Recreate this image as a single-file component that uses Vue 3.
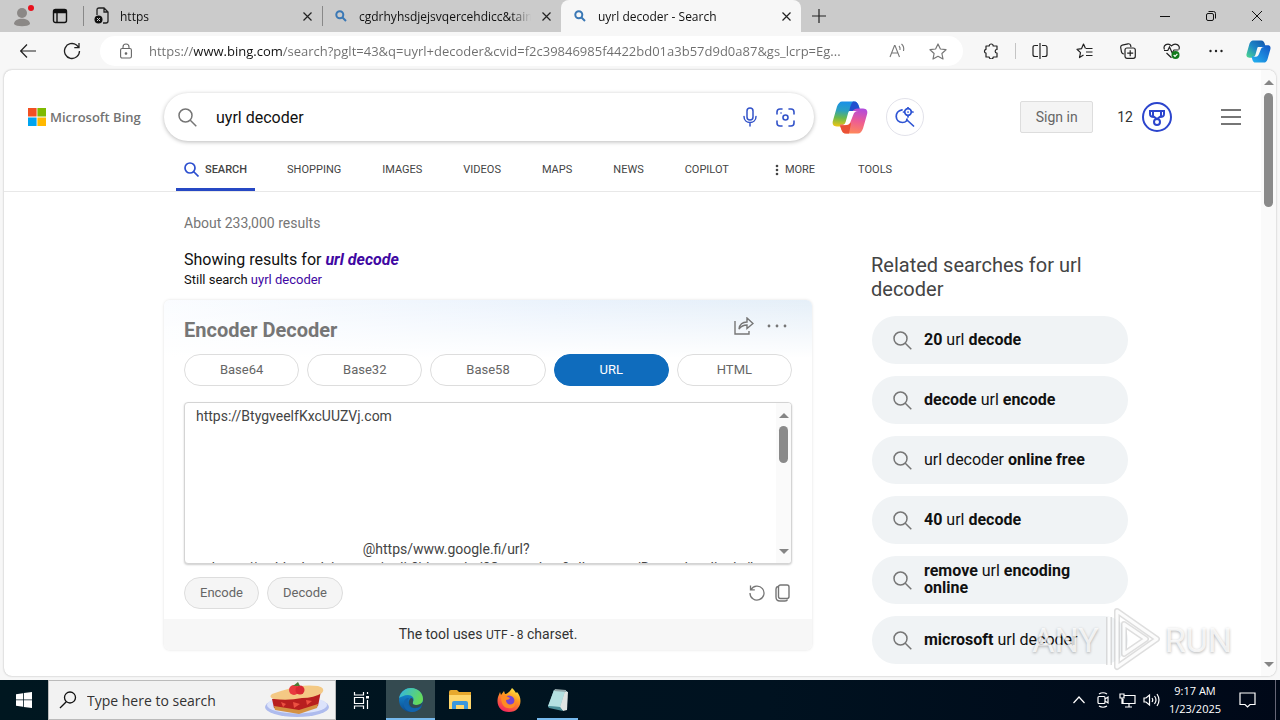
<template>
  <div class="desktop">
    <div class="browser">
      <header class="tab-bar">
        <button class="tab-tool profile" aria-label="Profile">
          <svg width="24" height="24" viewBox="0 0 24 24">
            <circle cx="10" cy="9" r="5" fill="#8b8886" />
            <path d="M2 20c0-7 16-7 16 0-2 3-14 3-16 0z" fill="#8b8886" />
            <circle cx="19" cy="4" r="3" fill="#e8101c" />
          </svg>
        </button>
        <button class="tab-tool workspaces" aria-label="Workspaces">
          <svg width="16" height="16" viewBox="0 0 16 16" fill="none" stroke="#111" stroke-width="1.4">
            <rect x="1.5" y="1.5" width="13" height="13" rx="2" />
            <path d="M1.5 3.5h13M5 5v9" />
            <path d="M2 2.5h12v2H2z" fill="#111" />
          </svg>
        </button>
        <div v-for="tab in tabs" :key="tab.title" class="tab" :class="{ active: tab.active }">
          <svg v-if="tab.file" width="16" height="18" viewBox="0 0 16 18" fill="none" stroke="#222" stroke-width="1.3">
            <path d="M3 8V3q0-2 2-2h5l4 4v9q0 2-2 2H9M10 1v4h4" />
            <circle cx="4.5" cy="12.5" r="4" fill="#111" stroke="none" />
            <path d="M3 11l3 3M6 11l-3 3" stroke="#ccc" stroke-width="1" />
          </svg>
          <svg v-else class="favicon" width="12" height="12" viewBox="0 0 12 12" fill="none" stroke="#3a78b5" stroke-width="2">
            <circle cx="4.8" cy="4.8" r="3.5" />
            <path d="M7.5 7.5l3.5 3.5" />
          </svg>
          <span class="tab-title">{{ tab.title }}</span>
          <button class="tab-close" aria-label="Close tab">
            <svg width="9" height="9" viewBox="0 0 9 9" stroke="#222" stroke-width="1.2"><path d="M.5.5l8 8M8.5.5l-8 8" /></svg>
          </button>
        </div>
        <button class="new-tab" aria-label="New tab">
          <svg width="14" height="14" viewBox="0 0 14 14" stroke="#222" stroke-width="1.2"><path d="M7 0v14M0 7h14" /></svg>
        </button>
        <div class="window-controls">
          <button aria-label="Minimize">
            <svg width="10" height="10" viewBox="0 0 10 10" stroke="#111"><path d="M0 5.5h10" /></svg>
          </button>
          <button aria-label="Restore">
            <svg width="10" height="10" viewBox="0 0 10 10" fill="none" stroke="#111">
              <rect x=".5" y="2.5" width="7" height="7" rx="1.5" />
              <path d="M2.500.5h5q2 0 2 2v5" />
            </svg>
          </button>
          <button aria-label="Close">
            <svg width="10" height="10" viewBox="0 0 10 10" stroke="#111"><path d="M0 0l10 10M10 0L0 10" /></svg>
          </button>
        </div>
      </header>

      <div class="toolbar">
        <button class="tool" aria-label="Back">
          <svg width="16" height="14" viewBox="0 0 16 14" fill="none" stroke="#222" stroke-width="1.2"><path d="M16 7H1M7 .5L.7 7 7 13.5" /></svg>
        </button>
        <button class="tool" aria-label="Refresh">
          <svg width="18" height="18" viewBox="0 0 18 18" fill="none" stroke="#222" stroke-width="1.3">
            <path d="M16.5 9A7.5 7.5 0 1 1 13.5 3L16 5.5M16 1v4.700h-4.700" />
          </svg>
        </button>
        <div class="address">
          <svg width="12" height="16" viewBox="0 0 12 16" fill="none" stroke="#666" stroke-width="1.1">
            <rect x=".6" y="5.5" width="10.8" height="9.5" rx="1.5" />
            <path d="M3 5.5V4q0-3 3-3t3 3v1.5" />
            <circle cx="6" cy="10.5" r=".8" fill="#666" />
          </svg>
          <input v-model="url" type="text" aria-label="Address" spellcheck="false" />
          <button aria-label="Read aloud">
            <svg width="18" height="16" viewBox="0 0 18 16" fill="none" stroke="#777" stroke-width="1.1">
              <path d="M1 14L5.5 2.5h.5L10.5 14M2.800 10h6M10 3q1.500 1.500 1 4M12.5 1q3 2.500 2 7" />
            </svg>
          </button>
          <button aria-label="Add to favorites">
            <svg width="18" height="17" viewBox="0 0 18 17" fill="none" stroke="#777" stroke-width="1.2" stroke-linejoin="round">
              <path d="M9 1l2.400 5 5.600.7-4.100 3.800 1.100 5.500L9 13.300 4 16l1.100-5.500L1 6.700 6.600 6z" />
            </svg>
          </button>
        </div>
        <button class="tool" aria-label="Extensions">
          <svg width="16" height="16" viewBox="0 0 16 16" fill="none" stroke="#222" stroke-width="1.2" stroke-linejoin="round">
            <path d="M3 3h3.200a2 2 0 0 1 4 0H14v3.500a1.800 1.800 0 0 0 0 3.700V14h-3.800a2 2 0 0 1-4 0H3v-3.800a2 2 0 0 1 0-3.900z" />
          </svg>
        </button>
        <span class="tool-divider"></span>
        <button class="tool" aria-label="Split screen">
          <svg width="16" height="16" viewBox="0 0 16 16" fill="none" stroke="#222" stroke-width="1.2">
            <path d="M6 2.5H3q-2 0-2 2v7q0 2 2 2h3M10 2.5h3q2 0 2 2v7q0 2-2 2h-3M8 0v16" />
          </svg>
        </button>
        <button class="tool" aria-label="Favorites">
          <svg width="17" height="16" viewBox="0 0 17 16" fill="none" stroke="#222" stroke-width="1.2" stroke-linejoin="round">
            <path d="M9.5 5.5L7.5 1l-2 4.700L1 6.300l3.500 3.300-1 5L7.5 12M10 5.5h6.500M10 9h6.500M10 12.5h6.500" />
          </svg>
        </button>
        <button class="tool" aria-label="Collections">
          <svg width="16" height="16" viewBox="0 0 16 16" fill="none" stroke="#222" stroke-width="1.2">
            <path d="M4 11q-2 0-2.500-2L.7 4.500Q.5 2.700 2.200 2.200L8 .8q2-.3 2.600 1.500L11 4" />
            <rect x="5" y="5" width="10.3" height="10.3" rx="2" />
            <path d="M10.2 7.300v6M7.200 10.200h6" />
          </svg>
        </button>
        <button class="tool" aria-label="Browser essentials">
          <svg width="18" height="18" viewBox="0 0 18 18" fill="none" stroke="#222" stroke-width="1.2">
            <path d="M1.500 7.500C-.5 3 5 .2 8.500 3.800 12 .2 18 3 15.800 7.500M1 8.500h3.800L6.500 5l2.700 6 1.800-3h4.500M3.500 11l5 4.800" />
            <circle cx="12.5" cy="13" r="4" fill="#117a1b" stroke="none" />
            <path d="M10.700 13l1.300 1.300 2.400-2.500" stroke="#fff" />
          </svg>
        </button>
        <button class="tool" aria-label="Settings and more">
          <svg width="14" height="4" viewBox="0 0 14 4" fill="#222"><circle cx="1.5" cy="2" r="1.2" /><circle cx="7" cy="2" r="1.2" /><circle cx="12.5" cy="2" r="1.2" /></svg>
        </button>
        <button class="tool copilot-tool" aria-label="Copilot">
          <svg width="25" height="23" viewBox="0 0 36 32">
            <defs>
              <linearGradient id="sideA" x1="1" y1="0" x2="0" y2="1"><stop offset="0" stop-color="#1352a8" /><stop offset=".5" stop-color="#1d86c7" /><stop offset="1" stop-color="#4fdb8d" /></linearGradient>
              <linearGradient id="sideB" x1="1" y1="0" x2="0" y2="1"><stop offset="0" stop-color="#24b5f1" /><stop offset="1" stop-color="#1255c5" /></linearGradient>
            </defs>
            <path :d="ribbon" fill="url(#sideA)" />
            <path :d="ribbon" fill="url(#sideB)" transform="rotate(180 18 16)" />
            <path :d="ribbonGap" fill="#f7f7f7" />
          </svg>
        </button>
      </div>

      <div class="page">
        <div class="content">
          <div class="search-header">
            <a href="#" class="logo">
              <svg width="18" height="18" viewBox="0 0 18 18">
                <path d="M0 0h8.600v8.600H0z" fill="#f25022" /><path d="M9.400 0H18v8.600H9.400z" fill="#7fba00" />
                <path d="M0 9.400h8.600V18H0z" fill="#00a4ef" /><path d="M9.400 9.400H18V18H9.400z" fill="#ffb900" />
              </svg>
              <span>Microsoft Bing</span>
            </a>
            <form class="search-box" @submit.prevent>
              <svg width="19" height="19" viewBox="0 0 19 19" fill="none" stroke="#767676" stroke-width="1.5"><circle cx="7.5" cy="7.5" r="6.5" /><path d="M12.3 12.3l6 6" /></svg>
              <input v-model="query" type="text" aria-label="Search query" spellcheck="false" />
              <button type="button" aria-label="Search by voice">
                <svg width="14" height="20" viewBox="0 0 14 20" fill="none" stroke="#3353c9" stroke-width="1.5" stroke-linecap="round">
                  <rect x="4" y="1" width="6" height="12" rx="3" /><path d="M1 9.500c0 8 12 8 12 0M7 16v3" />
                </svg>
              </button>
              <button type="button" aria-label="Search by image">
                <svg width="19" height="19" viewBox="0 0 19 19" fill="none" stroke="#3353c9" stroke-width="1.6" stroke-linecap="round">
                  <path d="M1 6V4q0-3 3-3h2M13 1h2q3 0 3 3v2M18 13v2q0 3-3 3h-2M6 18H4q-3 0-3-3v-2" />
                  <circle cx="9.5" cy="9.5" r="2.5" /><path d="M5 5h.1" />
                </svg>
              </button>
            </form>
            <a href="#" class="copilot" aria-label="Copilot">
              <svg width="36" height="33" viewBox="0 0 36 32">
                <defs>
                  <linearGradient id="mainA" x1=".3" y1="0" x2=".2" y2="1"><stop offset="0" stop-color="#1890e8" /><stop offset=".35" stop-color="#2ba0c0" /><stop offset=".65" stop-color="#6cb94c" /><stop offset="1" stop-color="#f0c614" /></linearGradient>
                  <linearGradient id="mainB" x1=".4" y1="1" x2=".6" y2="0"><stop offset="0" stop-color="#b34cda" /><stop offset=".5" stop-color="#ee5d92" /><stop offset="1" stop-color="#ff8a58" /></linearGradient>
                </defs>
                <path :d="ribbon" fill="url(#mainA)" />
                <path d="M19 0h3c3 0 4 2 5 5l1 4h-4c-3 0-4 1-5 4l-2-3c1-4 2-8 4-10z" fill="#2250cf" />
                <path :d="ribbon" fill="url(#mainB)" transform="rotate(180 18 16)" />
                <path d="M17 32h-3c-3 0-4-2-5-5l-1-3h4c3 0 4-1 5-4l2 2z" fill="#ea5136" />
                <path :d="ribbonGap" fill="#fff" />
              </svg>
            </a>
            <button class="deep-search" aria-label="Deep search">
              <svg width="20" height="20" viewBox="0 0 20 20" fill="none" stroke="#2f55d4" stroke-width="1.7" stroke-linecap="round">
                <path d="M7 2.800C-1 4-.5 15.500 7.500 15.500c2 0 3.300-.8 4-1.500l.5-2M12 13l6.500 6" />
                <circle cx="13" cy="5" r="3.3" /><path d="M13 .2v1M13 9v1M8.500 5h.8M17 5h1M13 5h.1" />
              </svg>
            </button>
            <div class="account">
              <button class="sign-in">Sign in</button>
              <a href="#" class="rewards">
                <span>12</span>
                <svg width="30" height="30" viewBox="0 0 30 30" fill="none" stroke="#2c45cd" stroke-width="2">
                  <circle cx="15" cy="15" r="14" />
                  <path d="M11 9h8v5l-4 3-4-3zM11 9H8v3q0 3 4 3M19 9h3v3q0 3-4 3" /><circle cx="15" cy="20" r="3" />
                </svg>
              </a>
              <button class="menu" aria-label="Settings and quick links"><i></i><i></i><i></i></button>
            </div>
          </div>

          <nav class="scopes">
            <a href="#" class="current">
              <svg width="15" height="15" viewBox="0 0 15 15" fill="none" stroke="#2c4fcf" stroke-width="1.7"><circle cx="6" cy="6" r="5" /><path d="M9.500 9.500l5 5" /></svg>
              SEARCH
            </a>
            <a v-for="scope in scopes" :key="scope" href="#">{{ scope }}</a>
            <a href="#" class="more">
              <svg width="4" height="12" viewBox="0 0 4 12" fill="#444"><circle cx="2" cy="2" r="1.3" /><circle cx="2" cy="6" r="1.3" /><circle cx="2" cy="10" r="1.3" /></svg>
              MORE
            </a>
            <a href="#">TOOLS</a>
          </nav>

          <div class="columns">
            <main>
              <p class="count">About 233,000 results</p>
              <p class="showing">Showing results for <a href="#">url decode</a></p>
              <p class="still">Still search <a href="#">uyrl decoder</a></p>

              <section class="card">
                <div class="card-body">
                  <div class="card-head">
                    <h2>Encoder Decoder</h2>
                    <button aria-label="Share">
                      <svg width="20" height="18" viewBox="0 0 20 18" fill="none" stroke="#767676" stroke-width="1.4">
                        <path d="M1 4v13h14v-3" /><path d="M5 12q1-7 8-7V1l6 5.500-6 5V8Q8 8 5 12z" />
                      </svg>
                    </button>
                    <button aria-label="More options">
                      <svg width="20" height="4" viewBox="0 0 20 4" fill="#767676"><circle cx="2" cy="2" r="1.4" /><circle cx="10" cy="2" r="1.4" /><circle cx="18" cy="2" r="1.4" /></svg>
                    </button>
                  </div>
                  <div class="formats">
                    <button v-for="f in formats" :key="f" :class="{ selected: f === format }" @click="format = f">{{ f }}</button>
                  </div>
                  <div class="text-area">
                    <textarea v-model="source" aria-label="Text to encode or decode" spellcheck="false"></textarea>
                    <div class="scrollbar inner"><i class="up"></i><i class="thumb"></i><i class="down"></i></div>
                  </div>
                  <div class="actions">
                    <button class="action">Encode</button>
                    <button class="action">Decode</button>
                    <button class="icon-btn push" aria-label="Reset">
                      <svg width="16" height="16" viewBox="0 0 16 16" fill="none" stroke="#767676" stroke-width="1.3"><path d="M2 4.500A7 7 0 1 1 1 8M1.500.5v4.300h4.300" /></svg>
                    </button>
                    <button class="icon-btn" aria-label="Copy">
                      <svg width="15" height="18" viewBox="0 0 15 18" fill="none" stroke="#767676" stroke-width="1.4"><rect x="3.5" y="1" width="10.5" height="13.5" rx="2" /><path d="M3 2.500Q1 3 1 5v8q0 4 4 4h5q2 0 2.500-1.500" /></svg>
                    </button>
                  </div>
                </div>
                <p class="card-foot">The tool uses <small>UTF - 8</small> charset.</p>
              </section>
            </main>

            <aside>
              <h2>Related searches for url decoder</h2>
              <a v-for="(item, i) in related" :key="i" href="#" class="related">
                <svg width="19" height="19" viewBox="0 0 19 19" fill="none" stroke="#767676" stroke-width="1.5"><circle cx="7.5" cy="7.5" r="6.5" /><path d="M12.3 12.3l6 6" /></svg>
                <span class="related-text"><component :is="part.bold ? 'b' : 'span'" v-for="(part, j) in item" :key="j">{{ part.text }}</component></span>
              </a>
            </aside>
          </div>
        </div>
        <div class="scrollbar outer"><i class="up"></i><i class="thumb"></i><i class="down"></i></div>
      </div>
    </div>

    <div class="watermark">
      <span>ANY</span>
      <svg width="60" height="64" viewBox="0 0 60 64" fill="none" stroke-linejoin="round">
        <path d="M15 3l40 28-40 28zM7 9v48M22 16l22 15-22 15z" stroke="#c8c8c8" stroke-opacity=".6" stroke-width="6" />
        <path d="M15 3l40 28-40 28zM7 9v48M22 16l22 15-22 15z" stroke="#fff" stroke-opacity=".9" stroke-width="3" />
      </svg>
      <span>RUN</span>
    </div>

    <footer class="taskbar">
      <button class="task start" aria-label="Start">
        <svg width="16" height="16" viewBox="0 0 16 16" fill="#fff"><path d="M0 2.200l7-1v6.300H0zM7.800 1.100L16 0v7.500H7.800zM0 8.300h7v6.500l-7-1zM7.800 8.300H16V16l-8.200-1.100z" /></svg>
      </button>
      <label class="task-search">
        <svg width="18" height="18" viewBox="0 0 18 18" fill="none" stroke="#111" stroke-width="1.3"><circle cx="11" cy="6.5" r="5.5" /><path d="M7.300 10.700L1 17" /></svg>
        <input type="text" placeholder="Type here to search" aria-label="Type here to search" />
        <svg width="66" height="36" viewBox="0 0 66 36">
          <ellipse cx="33" cy="25" rx="32" ry="10" fill="#aebbed" />
          <ellipse cx="33" cy="23" rx="30" ry="8.5" fill="#dce3fb" />
          <path d="M8 17l49-8-3 15-19 6-25-4z" fill="#b81f1f" />
          <path d="M10 24l25 4 19-6-1 4-18 6-24-4z" fill="#d49142" />
          <path d="M8 12q8-3 16-5 14-5 30-3 8 2 4 7-8 5-20 5-14 3-28 1-6-2-2-5z" fill="#f4c984" />
          <path d="M17 20l5 2-3 3zM29 20l7 2-6 4zM42 18l6 1-5 4z" fill="#ec5142" />
          <circle cx="30" cy="8" r="5" fill="#e83a3f" /><circle cx="36" cy="8" r="4.5" fill="#d92833" />
          <path d="M29 4l5-4 2 4z" fill="#4c7a34" />
        </svg>
      </label>
      <button class="task" aria-label="Task view">
        <svg width="17" height="17" viewBox="0 0 17 17" fill="none" stroke="#fff" stroke-width="1.2"><path d="M1.500 0v3h9V0M1.500 17v-3h9v3M1.500 5.500h9v6h-9zM14.500 0v2M14.500 8v9" /><path d="M13 4h3v2.500h-3z" fill="#fff" stroke="none" /></svg>
      </button>
      <button class="task open focused" aria-label="Microsoft Edge">
        <svg width="24" height="24" viewBox="0 0 24 24">
          <defs>
            <linearGradient id="edgeTop" x1="0" y1="0" x2="1" y2=".4"><stop offset="0" stop-color="#30b4ea" /><stop offset="1" stop-color="#65da5a" /></linearGradient>
            <linearGradient id="edgeLow" x1="0" y1="0" x2="0" y2="1"><stop offset="0" stop-color="#1596df" /><stop offset="1" stop-color="#0c4c91" /></linearGradient>
          </defs>
          <circle cx="12" cy="12" r="12" fill="url(#edgeLow)" />
          <path d="M0 10C2 3 7 0 12 0c7 0 12 5 12 11 0 4-3 6-7 6-3 0-4-1-3-3 2-4-1-7-5-7-4 0-7 2-9 3z" fill="url(#edgeTop)" />
          <path d="M10 10c-4 6 0 11 8 10 2 0 4-1 5-2-2 4-6 6-11 6-4-1-8-4-7-9 0-3 2-5 5-5z" fill="#1264ad" />
          <path d="M14 14c-1 2 0 3 3 3 3 0 5-1 7-3-1 3-4 6-8 6-5 0-8-5-5-9 1-2 4-1 3 3z" fill="#344a50" />
        </svg>
      </button>
      <button class="task" aria-label="File Explorer">
        <svg width="22" height="20" viewBox="0 0 22 20"><path d="M0 2q0-2 2-2h6l2 2h12v17H0z" fill="#e7a82d" /><path d="M0 5h22v14H0z" fill="#ffd66b" /><path d="M3 19v-6q0-2 2-2h12q2 0 2 2v6h-4v-4H7v4z" fill="#3a97dd" /></svg>
      </button>
      <button class="task" aria-label="Firefox">
        <svg width="24" height="24" viewBox="0 0 24 24">
          <defs><linearGradient id="fox" x1=".8" y1="0" x2=".3" y2="1"><stop offset="0" stop-color="#fff04a" /><stop offset=".4" stop-color="#ff9a1e" /><stop offset="1" stop-color="#f4235f" /></linearGradient></defs>
          <path d="M15 0c2 2 3 3 4 5l1-1c7 8 3 20-8 20C3 24-1 17 1 9l2-5 1 3 3-4 1 3c3 0 5-3 7-6z" fill="url(#fox)" />
          <circle cx="12" cy="13" r="5.5" fill="#7444d4" />
          <path d="M4 9q4-3 7 0l2 1q-1 2-4 2c0 6 8 6 9 0 2 7-3 9-7 8C6 20 4 14 4 9z" fill="#ff8b23" />
        </svg>
      </button>
      <button class="task open small" aria-label="Notepad">
        <svg width="22" height="24" viewBox="0 0 22 24"><path d="M7 2l13 1-3 19-16-3z" fill="#73b4bb" /><path d="M7 2l11 1-5 16-12-1z" fill="#b4e0e1" /><path d="M18 3l3 1-1 18-4 1-3-4z" fill="#e0e4e2" /><path d="M8 1l11 1v2L7 3z" fill="#93a7aa" /><path d="M1 18l12 1 3 4-14-3z" fill="#4c8f99" /></svg>
      </button>

      <div class="tray">
        <button aria-label="Show hidden icons"><svg width="12" height="8" viewBox="0 0 12 8" fill="none" stroke="#fff" stroke-width="1.2"><path d="M.5 7L6 1l5.500 6" /></svg></button>
        <button aria-label="Meet now"><svg width="12" height="16" viewBox="0 0 12 16" fill="none" stroke="#fff" stroke-width="1.2"><rect x="1" y="4.5" width="7" height="7" rx="1" /><path d="M8 7l3-2v6L8 9M2 2q4-2.500 8 0M2 14q4 2.500 8 0" /></svg></button>
        <button aria-label="Network"><svg width="17" height="15" viewBox="0 0 17 15" fill="none" stroke="#fff" stroke-width="1.2"><path d="M5 2.500h11v8H4V6M10 10.500V14M6 14h7M1 1h4v4H1zM3 5v6" /></svg></button>
        <button aria-label="Volume"><svg width="17" height="14" viewBox="0 0 17 14" fill="none" stroke="#fff" stroke-width="1.2"><path d="M1 5h2l3.500-3v10L3 9H1zM9 5q1.500 2 0 4M11.500 3q3 4 0 8M14 1q4 6 0 12" /></svg></button>
        <button class="clock"><time>9:17 AM</time><time>1/23/2025</time></button>
        <button class="notice" aria-label="Notifications"><svg width="17" height="17" viewBox="0 0 17 17" fill="none" stroke="#fff" stroke-width="1.2"><path d="M1 1h15v11.500h-5L8.500 15 6 12.500H1z" /></svg></button>
        <button class="show-desktop" aria-label="Show desktop"></button>
      </div>
    </footer>
  </div>
</template>

<script setup>
import { ref } from "vue";

const ribbon =
  "M10 0H22C25 0 26 2 27 5L28 9H24C21 9 20 10 19 13L16 21C15 24 13 25 10 25H5C1 25 0 22 1 19L5 5C6 2 8 0 10 0Z";
const ribbonGap =
  "M18 9.500H26C23 9.500 22 11 21 14L19 19C18 22 17 23.500 14 23.500H10C13 23.500 13.500 21 14.300 18L16 12C16.500 10 17 9.500 18 9.500Z";

const tabs = [
  { title: "https", file: true },
  { title: "cgdrhyhsdjejsvqercehdicc&taimn" },
  { title: "uyrl decoder - Search", active: true },
];

const url = ref(
  "https://www.bing.com/search?pglt=43&q=uyrl+decoder&cvid=f2c39846985f4422bd01a3b57d9d0a87&gs_lcrp=Eg..."
);
const query = ref("uyrl decoder");

const scopes = ["SHOPPING", "IMAGES", "VIDEOS", "MAPS", "NEWS", "COPILOT"];

const formats = ["Base64", "Base32", "Base58", "URL", "HTML"];
const format = ref("URL");
const source = ref(
  "https://BtygveelfKxcUUZVj.com" +
    "\n".repeat(7) +
    " ".repeat(48) +
    "@https/www.google.fi/url?\n" +
    "q=https://weblockedsite.com/redir?id=xanduri?Q=userdata&ullangrees/Rasta.dnsali.edu/h"
);

const related = [
  [{ text: "20", bold: true }, { text: " url " }, { text: "decode", bold: true }],
  [{ text: "decode", bold: true }, { text: " url " }, { text: "encode", bold: true }],
  [{ text: "url decoder " }, { text: "online free", bold: true }],
  [{ text: "40", bold: true }, { text: " url " }, { text: "decode", bold: true }],
  [{ text: "remove", bold: true }, { text: " url " }, { text: "encoding online", bold: true }],
  [{ text: "microsoft", bold: true }, { text: " url decoder" }],
];
</script>

<style>
body {
  margin: 0;
}
</style>

<style scoped>
* {
  box-sizing: border-box;
}

button,
input,
textarea {
  margin: 0;
  padding: 0;
  border: 0;
  outline: 0;
  background: none;
  color: inherit;
  font: inherit;
}

a {
  color: inherit;
  text-decoration: none;
}

p,
h2 {
  margin: 0;
}

svg {
  display: block;
  flex: none;
}

.desktop {
  position: relative;
  display: flex;
  flex-direction: column;
  height: 100vh;
  overflow: hidden;
  font-family: "Open Sans", "Noto Sans", sans-serif;
}

.browser {
  display: flex;
  flex: 1;
  flex-direction: column;
  min-height: 0;
  padding-bottom: 4px;
  background: #f7f7f7;
}

/* tabs */
.tab-bar {
  display: flex;
  height: 32px;
  background: #cbcbcb;
  font-size: 12px;
  color: #111;
}

.tab-tool {
  display: flex;
  align-items: center;
  justify-content: center;
}

.profile {
  width: 44px;
  padding-left: 4px;
}

.workspaces {
  width: 32px;
  margin-right: 7px;
}

.tab {
  display: flex;
  flex: 0 1 239px;
  align-items: center;
  min-width: 0;
  padding: 0 9px 0 11px;
  position: relative;
}

.tab::before {
  content: "";
  position: absolute;
  left: 0;
  top: 6px;
  height: 20px;
  border-left: 1px solid #888;
}

.tab.active {
  flex-basis: 240px;
  border-radius: 8px 8px 0 0;
  background: #f7f7f7;
}

.tab.active::before {
  display: none;
}

.favicon {
  margin: 0 2px;
}

.tab-title {
  flex: 1;
  margin: 0 10px;
  overflow: hidden;
  white-space: nowrap;
  mask-image: linear-gradient(90deg, #000 calc(100% - 20px), transparent);
}

.tab-close {
  padding: 0 1px;
}

.new-tab {
  padding: 0 11px;
}

.window-controls {
  display: flex;
  margin-left: auto;
}

.window-controls button {
  display: flex;
  align-items: center;
  justify-content: center;
  width: 46px;
}

/* toolbar */
.toolbar {
  display: flex;
  align-items: center;
  height: 38px;
  padding: 0 2px 0 6px;
}

.tool {
  display: flex;
  align-items: center;
  justify-content: center;
  width: 44px;
  height: 30px;
}

.copilot-tool {
  width: 40px;
}

.tool-divider {
  width: 1px;
  height: 16px;
  margin: 0 2px;
  background: #c4c4c4;
}

.address {
  display: flex;
  flex: 1;
  align-items: center;
  height: 30px;
  margin: 0 6px;
  padding: 0 15px 0 20px;
  border-radius: 15px;
  background: #fff;
}

.address input {
  flex: 1;
  min-width: 0;
  height: 30px;
  margin-left: 17px;
  background: linear-gradient(90deg, #6d6d6d 45px, #111 45px, #111 133px, #6d6d6d 133px);
  background-clip: text;
  color: transparent;
  font-size: 13px;
}

.address button {
  display: flex;
  justify-content: center;
  width: 20px;
  margin-left: 20px;
}

/* page */
.page {
  display: flex;
  flex: 1;
  min-height: 0;
  margin: 0 4px;
  overflow: hidden;
  border-radius: 8px;
  background: #fff;
  box-shadow: 0 0 2px #aaa;
  font-family: Roboto, sans-serif;
}

.content {
  flex: 1;
  min-width: 0;
}

.search-header {
  display: flex;
  align-items: center;
  padding: 23px 20px 0 24px;
}

.logo {
  display: flex;
  align-items: center;
  width: 136px;
  gap: 4px;
  color: #737373;
  font: 600 13px "Open Sans", sans-serif;
  white-space: nowrap;
}

.search-box {
  display: flex;
  flex: 0 1 650px;
  align-items: center;
  height: 48px;
  padding: 0 19px 0 14px;
  gap: 19px;
  border-radius: 24px;
  background: #fff;
  box-shadow: 0 1px 4px rgba(0, 0, 0, 0.28);
}

.search-box input {
  flex: 1;
  min-width: 0;
  font-size: 16px;
  color: #111;
}

.copilot {
  margin-left: 18px;
}

.deep-search {
  display: flex;
  align-items: center;
  justify-content: center;
  width: 38px;
  height: 38px;
  margin-left: 18px;
  border: 1px solid #e2e2ea;
  border-radius: 50%;
}

.account {
  display: flex;
  align-items: center;
  margin-left: auto;
  font-size: 14px;
}

.sign-in {
  width: 73px;
  height: 32px;
  border: 1px solid #ddd;
  border-radius: 2px;
  background: #f4f4f4;
  color: #666;
}

.rewards {
  display: flex;
  align-items: center;
  gap: 9px;
  margin: 0 49px 0 24px;
  color: #333;
}

.menu {
  display: flex;
  flex-direction: column;
  gap: 5px;
  width: 20px;
}

.menu i {
  height: 2px;
  background: #767676;
}

.scopes {
  display: flex;
  gap: 41px;
  height: 51px;
  padding-left: 172px;
  border-bottom: 1px solid #e8e8e8;
  color: #444;
  font-size: 11px;
  line-height: 58px;
}

.scopes .current {
  display: flex;
  align-items: center;
  gap: 6px;
  margin-right: -9px;
  padding: 10px 8px 0;
  border-bottom: 3px solid #2648c4;
  font-weight: 500;
  line-height: 16px;
}

.scopes .more {
  display: flex;
  align-items: center;
  gap: 6px;
  margin: 0 2px 0 5px;
  padding-top: 7px;
  line-height: 16px;
}

.columns {
  display: flex;
  gap: 59px;
  padding-left: 160px;
}

main {
  flex: 0 1 648px;
}

main > p {
  padding-left: 20px;
}

.count {
  padding-top: 21px;
  color: #767676;
  font-size: 14px;
  line-height: 20px;
}

.showing {
  padding-top: 17px;
  color: #111;
  font-size: 16px;
  line-height: 20px;
}

.showing a {
  font-style: italic;
  font-weight: 700;
}

main > p a {
  color: #4007a2;
}

.still {
  color: #111;
  font-size: 13px;
  line-height: 20px;
}

.card {
  margin-top: 10px;
  overflow: hidden;
  border-radius: 6px;
  box-shadow: 0 0 3px rgba(0, 0, 0, 0.13);
}

.card-body {
  padding: 13px 20px 10px;
  background: linear-gradient(180deg, rgba(255, 255, 255, 0.1), #fff 58px), linear-gradient(90deg, #fafcff, #e8f1fc 60%, #e2edf7);
}

.card-head {
  display: flex;
  align-items: center;
  gap: 13px;
  height: 34px;
  padding-right: 5px;
}

.card-head h2 {
  flex: 1;
  color: #767676;
  font-size: 20px;
  font-weight: 700;
}

.card-head button {
  margin-bottom: 8px;
}

.formats {
  display: grid;
  grid-template-columns: repeat(5, 1fr);
  gap: 8px;
  margin-top: 7px;
}

.formats button {
  height: 32px;
  padding-bottom: 1px;
  border: 1px solid #ddd;
  border-radius: 16px;
  background: #fff;
  color: #666;
  font-size: 13px;
}

.formats .selected {
  border-color: #0f6cbd;
  background: #0f6cbd;
  color: #fff;
}

.text-area {
  display: flex;
  height: 162px;
  margin-top: 16px;
  overflow: hidden;
  border: 1px solid #d4d4d4;
  border-radius: 4px;
  background: #fff;
  box-shadow: 0 1px 2px rgba(0, 0, 0, 0.2);
}

.text-area textarea {
  flex: 1;
  padding: 4px 0 0 11px;
  overflow: hidden;
  resize: none;
  color: #444;
  font-size: 14px;
  line-height: 19px;
  white-space: pre;
}

.actions {
  display: flex;
  align-items: center;
  gap: 8px;
  margin-top: 13px;
}

.action {
  height: 32px;
  padding: 0 15px 1px;
  border: 1px solid #ddd;
  border-radius: 16px;
  background: #f5f5f5;
  color: #666;
  font-size: 13px;
}

.push {
  margin-left: auto;
}

.icon-btn {
  padding: 0 2px 0 0;
}

.card-foot {
  background: #f7f7f7;
  color: #333;
  font-size: 14px;
  line-height: 31px;
  text-align: center;
}

.card-foot small {
  font-size: 12px;
  line-height: 16px;
}

aside {
  width: 257px;
  padding-top: 61px;
}

aside h2 {
  margin-bottom: 15px;
  color: #444;
  font-size: 20px;
  font-weight: 400;
  line-height: 24px;
}

.related {
  display: flex;
  align-items: center;
  height: 48px;
  margin: 0 0 12px 1px;
  padding: 0 20px 0 21px;
  gap: 12px;
  border-radius: 24px;
  background: #f0f3f5;
  color: #111;
  font-size: 16px;
  line-height: 17px;
}

.related-text {
  padding-bottom: 2px;
}

/* scrollbars */
.scrollbar {
  display: flex;
  flex: none;
  flex-direction: column;
  align-items: center;
  width: 15px;
  background: #fafafa;
}

.scrollbar .up,
.scrollbar .down {
  border: 5px solid transparent;
}

.scrollbar .up {
  margin-top: 10px;
  border-top: 0;
  border-bottom-color: #858585;
}

.scrollbar .down {
  margin: auto 0 9px;
  border-bottom: 0;
  border-top-color: #858585;
}

.scrollbar .thumb {
  width: 9px;
  margin-top: 8px;
  border-radius: 5px;
  background: #8a8a8a;
}

.outer .thumb {
  height: 114px;
}

.inner .thumb {
  height: 37px;
}

/* watermark */
.watermark {
  position: absolute;
  right: 48px;
  bottom: 48px;
  display: flex;
  align-items: center;
  gap: 3px;
  color: rgba(255, 255, 255, 0.8);
  font: 34px Roboto, sans-serif;
  text-shadow: 0 1px 3px rgba(0, 0, 0, 0.3);
  pointer-events: none;
}

/* taskbar */
.taskbar {
  display: flex;
  height: 40px;
  background: linear-gradient(90deg, #001720, #001220 60%, #000818);
  color: #fff;
}

.task {
  display: flex;
  align-items: center;
  justify-content: center;
  width: 49px;
  position: relative;
}

.task.start {
  width: 48px;
}

.task.focused {
  background: #344a50;
}

.task.open::after {
  content: "";
  position: absolute;
  right: 0;
  bottom: 0;
  left: 0;
  height: 2px;
  background: #76b9ed;
}

.task.small::after {
  right: 4px;
  left: 4px;
}

.task-search {
  display: flex;
  align-items: center;
  width: 288px;
  margin-right: 1px;
  padding: 0 5px 0 10px;
  gap: 10px;
  border: 1px solid #bbb;
  background: #f2f2f2;
  color: #333;
}

.task-search input {
  flex: 1;
  min-width: 0;
  font-size: 14px;
}

.task-search input::placeholder {
  color: #333;
  opacity: 1;
}

.tray {
  display: flex;
  margin-left: auto;
}

.tray button {
  display: flex;
  align-items: center;
  justify-content: center;
  width: 24px;
}

.tray .clock {
  flex-direction: column;
  width: 64px;
  font-size: 11px;
  line-height: 18px;
}

.tray .notice {
  width: 40px;
}

.tray .show-desktop {
  width: 5px;
  margin-left: 8px;
  border-left: 1px solid #667;
}
</style>
